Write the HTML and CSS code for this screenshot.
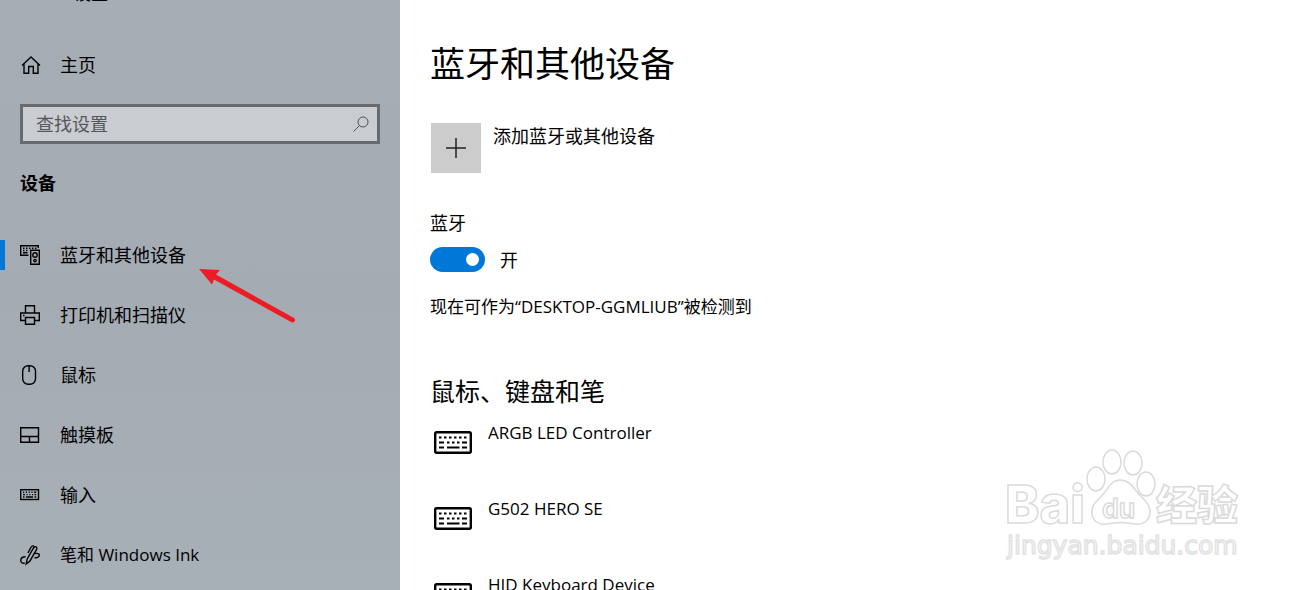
FILE: index.html
```html
<!DOCTYPE html>
<html lang="zh-CN">
<head>
    <meta charset="UTF-8">
    <meta name="viewport" content="width=device-width, initial-scale=1.0">
    <title>设置</title>
    <link rel="stylesheet" href="styles.css">
</head>
<body>
    <svg class="symbols" aria-hidden="true">
        <symbol id="keyboard" viewBox="0 0 38 23">
            <rect x="1.2" y="1.2" width="35.6" height="20.6" rx="1.5" fill="none" stroke="#000" stroke-width="2.4"/>
            <path d="M5 6.500h2.500M10 6.500h2.500M15 6.500h2.500M20 6.500h2.500M25 6.500h2.500M30 6.500h2.500M5 11.500h5M13 11.500h2.500M18 11.500h2.500M23 11.500h2.500M28 11.500h5M5 16.500h5M13 16.500h12.500M28 16.500h5" fill="none" stroke="#000" stroke-width="2"/>
        </symbol>
    </svg>

    <div class="settings">
        <aside class="sidebar">
            <div class="window-title">设置</div>
            <a href="#" class="nav-item home-link">
                <svg class="icon" viewBox="0 0 20 20"><path d="M2 10.500L11 2l9 8.500M4 9v9.300h4.700v-6.800h4.600v6.800H18V9"/></svg>
                <span>主页</span>
            </a>
            <form class="search">
                <input type="search" placeholder="查找设置" aria-label="查找设置">
                <button type="submit" aria-label="搜索">
                    <svg viewBox="0 0 16 16"><circle cx="10" cy="6" r="5"/><path d="M6.500 9.500L.5 15.500"/></svg>
                </button>
            </form>
            <h3>设备</h3>
            <nav>
                <a href="#" class="nav-item active">
                    <svg class="icon" viewBox="0 0 20 20">
                        <path d="M8.500 10.300H.7V.7h17.600V3M3 3.300h1.500M6 3.300h1.500M9 3.300h1.500M12 3.300h1.500M15 3.300h1.500M3 5.500h1.500M6 5.500h1.500M3 7.800h4.500"/>
                        <path d="M10.700 5.200h8.600v14.100h-8.600z"/>
                        <circle cx="15" cy="10" r="2.200"/>
                        <circle cx="15" cy="15.600" r="1.200"/>
                    </svg>
                    <span>蓝牙和其他设备</span>
                </a>
                <a href="#" class="nav-item">
                    <svg class="icon" viewBox="0 0 20 20"><path d="M5.500 8V.7h9V8M5.500 15.500H.7V8h18.600v7.500h-4.800M5.500 12.500h9v6.800h-9zM3 10.500h1.500"/></svg>
                    <span>打印机和扫描仪</span>
                </a>
                <a href="#" class="nav-item">
                    <svg class="icon" viewBox="0 0 20 20"><rect x="2.700" y=".7" width="12.800" height="18.600" rx="5.500"/><path d="M9.100 1v6"/></svg>
                    <span>鼠标</span>
                </a>
                <a href="#" class="nav-item">
                    <svg class="icon" viewBox="0 0 20 20"><path d="M.7 2.700h17.800v14.600H.7zM.7 11.500h17.800M9.500 11.500v5.800"/></svg>
                    <span>触摸板</span>
                </a>
                <a href="#" class="nav-item">
                    <svg class="icon" viewBox="0 0 20 20"><rect x=".7" y="4.700" width="17.800" height="9.800"/><path d="M3 7.300h1.200M5.800 7.300H7M8.600 7.300h1.200M11.400 7.300h1.200M14.200 7.300h2M3 9.600h2M6.500 9.600h1.200M9.300 9.600h1.200M12 9.600h1.200M14.500 9.600h1.700M3 12h1.500M6 12h7M14.500 12h1.700"/></svg>
                    <span>输入</span>
                </a>
                <a href="#" class="nav-item">
                    <svg class="icon" viewBox="0 0 20 20"><path d="M6.200 19l1-5L13.500 3q1.500-2 3-.800.800 1.200 0 2.500L9.800 16.200zM14 1q-2-.5-3.200 1.500L8 8M5.500 11.700Q1 11.800.7 15.200q.3 3.500 4 3M14.500 8.500q4.800-.5 4.800 1.800-.3 2.500-4.800 2.500"/></svg>
                    <span class="mixed">笔和 Windows Ink</span>
                </a>
            </nav>
            <svg class="arrow" viewBox="0 0 98 56" aria-hidden="true">
                <path d="M0 1l21 1-4 4.500L95 50q2 2 .5 3.500-1.500 1.500-3.500.500L15 11.500l-2 5z"/>
            </svg>
        </aside>

        <main>
            <h1>蓝牙和其他设备</h1>
            <button type="button" class="add-device">
                <span class="plus"><svg viewBox="0 0 20 20"><path d="M10 0v20M0 10h20"/></svg></span>
                <span class="add-text">添加蓝牙或其他设备</span>
            </button>
            <label class="toggle-label" for="bluetooth">蓝牙</label>
            <div class="toggle-row">
                <input type="checkbox" id="bluetooth" class="toggle" role="switch" checked>
                <span>开</span>
            </div>
            <p class="mixed">现在可作为“DESKTOP-GGMLIUB”被检测到</p>
            <h2>鼠标、键盘和笔</h2>
            <ul class="devices mixed">
                <li><svg><use href="#keyboard"/></svg><span>ARGB LED Controller</span></li>
                <li><svg><use href="#keyboard"/></svg><span>G502 HERO SE</span></li>
                <li><svg><use href="#keyboard"/></svg><span>HID Keyboard Device</span></li>
            </ul>
        </main>

        <svg class="watermark" viewBox="0 0 240 120">
            <ellipse cx="92" cy="33" rx="9" ry="12"/>
            <ellipse cx="108" cy="16" rx="9" ry="12"/>
            <ellipse cx="129" cy="17" rx="9" ry="12"/>
            <ellipse cx="142" cy="38" rx="9" ry="12"/>
            <path d="M116 34c9 0 13 7 18 13 6 7 12 11 12 19 0 9-7 13-15 12-9-2-20-2-29 0-8 1-15-4-14-13 0-8 7-11 12-18 5-6 8-13 16-13z"/>
            <text x="1" y="77" class="bai">Bai</text>
            <text x="98" y="72" class="du">du</text>
            <text x="152" y="74" class="jingyan">经验</text>
            <text x="3" y="108" class="site">jingyan.baidu.com</text>
        </svg>
    </div>
</body>
</html>
```
FILE: styles.css
```css
* {
    box-sizing: border-box;
}
body {
    margin: 0;
    font-family: "Open Sans", "Noto Sans CJK SC", sans-serif;
    font-size: 18px;
    line-height: 24px;
    color: #000;
    background: #fff;
}
h1, h2, h3, p, ul {
    margin: 0;
    padding: 0;
}
.symbols {
    display: none;
}
.settings {
    position: relative;
    display: flex;
    height: 100vh;
    overflow: hidden;
}
.mixed {
    font-size: 17px;
}

/* sidebar */
.sidebar {
    position: relative;
    flex: 0 0 400px;
    background: linear-gradient(#a7adb5, #a5abb3 50%, #a7afb7);
}
.window-title {
    margin-top: -18px;
    padding-left: 74px;
    font-size: 17px;
}
.nav-item {
    display: flex;
    align-items: center;
    height: 60px;
    color: #000;
    text-decoration: none;
}
.nav-item::before {
    content: "";
    width: 5px;
    height: 30px;
    margin-right: 15px;
}
.nav-item.active::before {
    background: #0078d7;
}
.icon {
    width: 20px;
    height: 20px;
    margin-right: 20px;
    overflow: visible;
    fill: none;
    stroke: #000;
    stroke-width: 1.4;
}
.home-link {
    margin-top: 29px;
}
.search {
    display: flex;
    align-items: center;
    height: 40px;
    margin: 9px 20px 27px;
    border: 3px solid #676b6f;
    background: #c9ccd0;
}
.search input {
    flex: 1;
    min-width: 0;
    padding: 0 13px;
    border: 0;
    outline: 0;
    background: transparent;
    font: inherit;
}
.search input::placeholder {
    color: #55585b;
}
.search button {
    width: 32px;
    height: 32px;
    padding: 8px;
    border: 0;
    background: transparent;
}
.search button svg {
    display: block;
    width: 16px;
    height: 16px;
    fill: none;
    stroke: #505356;
}
h3 {
    margin: 0 20px 30px;
    font-size: 18px;
    font-weight: 700;
}
.arrow {
    position: absolute;
    left: 199px;
    top: 268px;
    width: 98px;
    height: 56px;
    fill: #ed1c24;
}

/* main pane */
main {
    flex: 1;
    padding: 42px 30px 0;
}
h1 {
    font-size: 35px;
    font-weight: 400;
    line-height: 44px;
}
.add-device {
    display: flex;
    gap: 12px;
    margin: 37px 0 38px;
    padding: 0 0 0 1px;
    border: 0;
    background: none;
    font: inherit;
    color: #000;
}
.add-text {
    padding-top: 1px;
}
.plus {
    display: flex;
    align-items: center;
    justify-content: center;
    width: 50px;
    height: 50px;
    background: #ccc;
}
.plus svg {
    width: 20px;
    height: 20px;
    stroke: #222;
    stroke-width: 1.5;
}
.toggle-label {
    display: block;
}
.toggle-row {
    display: flex;
    align-items: center;
    gap: 15px;
    height: 25px;
    margin: 12px 0 23px;
}
.toggle {
    appearance: none;
    display: flex;
    align-items: center;
    width: 55px;
    height: 25px;
    margin: 0;
    padding: 0 6px;
    border-radius: 13px;
    background: #999;
}
.toggle::before {
    content: "";
    width: 13px;
    height: 13px;
    border-radius: 50%;
    background: #fff;
}
.toggle:checked {
    justify-content: flex-end;
    background: #0078d7;
}
h2 {
    margin: 56px 0 14px;
    font-size: 25px;
    font-weight: 400;
    line-height: 32px;
}
.devices {
    list-style: none;
}
.devices li {
    display: flex;
    align-items: flex-start;
    gap: 16px;
    height: 76px;
    padding-left: 4px;
}
.devices svg {
    width: 38px;
    height: 23px;
    margin-top: 10px;
}

/* watermark */
.watermark {
    position: absolute;
    right: 68px;
    bottom: 24px;
    width: 240px;
    height: 120px;
    fill: #fff;
    stroke: #dadada;
    stroke-width: 1.5;
    font-family: Inter, "Noto Sans CJK SC", sans-serif;
    font-weight: 800;
}
.bai {
    font-size: 52px;
}
.du {
    font-size: 27px;
    font-weight: 600;
}
.jingyan {
    font-size: 41px;
}
.site {
    font-family: "DejaVu Sans", sans-serif;
    font-size: 25px;
    font-weight: 400;
    stroke: #e2e2e2;
}
```
